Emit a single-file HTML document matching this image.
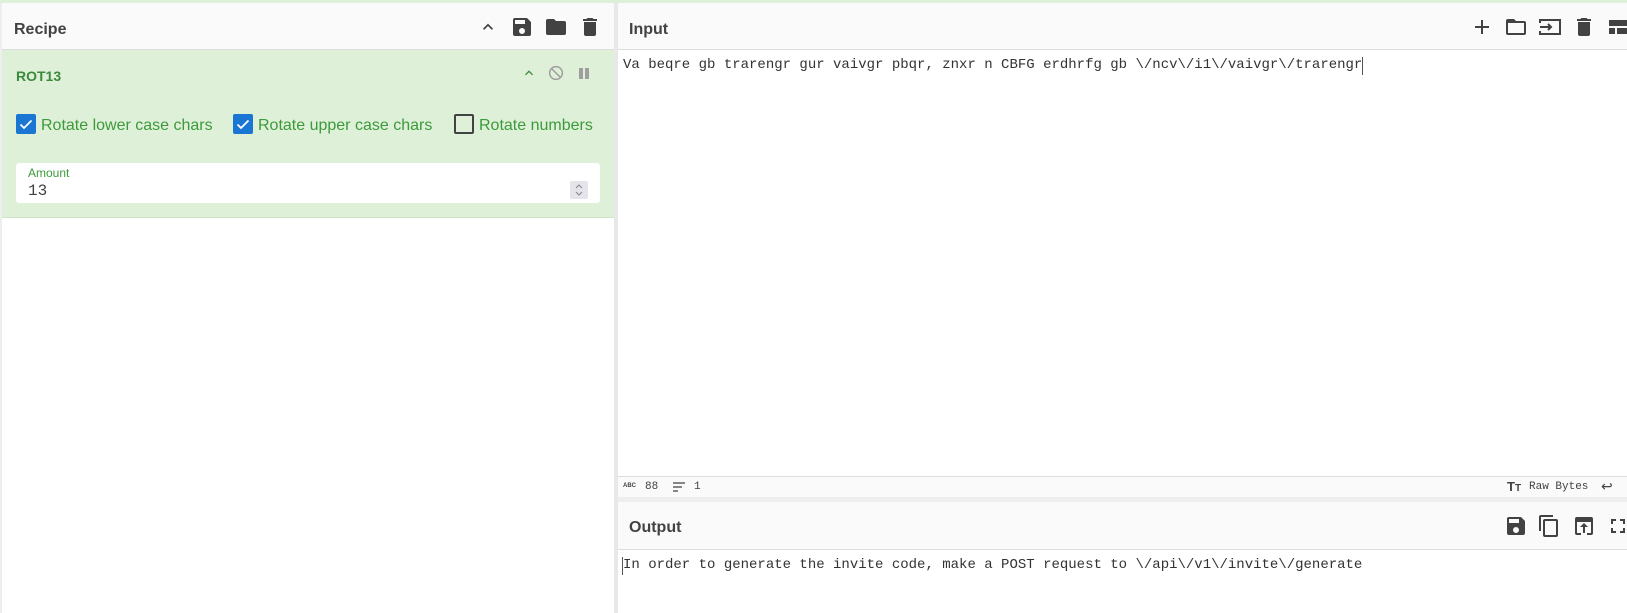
<!DOCTYPE html>
<html><head><meta charset="utf-8"><style>
*{margin:0;padding:0;box-sizing:border-box}
body{width:1627px;height:613px;overflow:hidden;background:#fff;font-family:"Liberation Sans",Arial,sans-serif;position:relative}
.a{position:absolute}
.t{position:absolute;white-space:nowrap}
.mono{font-family:"Liberation Mono",monospace}
svg{position:absolute}
</style></head><body>
<div class="a" style="left:0;top:0;width:1627px;height:3px;background:#dff0d8"></div>
<div class="a" style="left:0;top:3px;width:2px;height:610px;background:#eee"></div>
<!-- Recipe header -->
<div class="a" style="left:2px;top:3px;width:612px;height:47px;background:#fafafa;border-bottom:1px solid #ddd"></div>
<div class="t" style="left:14px;top:21px;font-size:16px;font-weight:bold;color:#424242">Recipe</div>
<svg style="left:478px;top:17px" width="20" height="20" viewBox="0 0 24 24"><path d="M7.4 15.4L12 10.8l4.6 4.6L18 14l-6-6-6 6z" fill="#424242"/></svg>
<svg style="left:510px;top:15px" width="24" height="24" viewBox="0 0 24 24"><path d="M17 3H5a2 2 0 0 0-2 2v14a2 2 0 0 0 2 2h14a2 2 0 0 0 2-2V7l-4-4zm-5 16a3 3 0 1 1 0-6 3 3 0 0 1 0 6zm3-10H5V5h10v4z" fill="#424242"/></svg>
<svg style="left:544px;top:15px" width="24" height="24" viewBox="0 0 24 24"><path d="M10 4H4a2 2 0 0 0-2 2v12a2 2 0 0 0 2 2h16a2 2 0 0 0 2-2V8a2 2 0 0 0-2-2h-8l-2-2z" fill="#424242"/></svg>
<svg style="left:578px;top:15px" width="24" height="24" viewBox="0 0 24 24"><path d="M6 19a2 2 0 0 0 2 2h8a2 2 0 0 0 2-2V7H6v12zM19 4h-3.5l-1-1h-5l-1 1H5v2h14V4z" fill="#424242"/></svg>
<!-- ROT13 -->
<div class="a" style="left:2px;top:50px;width:612px;height:168px;background:#dff0d8;border-bottom:1px solid #cfe3c6"></div>
<div class="t" style="left:16px;top:68px;font-size:14px;font-weight:bold;color:#3c8a3c">ROT13</div>
<svg style="left:521px;top:65px" width="16" height="16" viewBox="0 0 24 24"><path d="M7.4 15.4L12 10.8l4.6 4.6L18 14l-6-6-6 6z" fill="#3c8a3c"/></svg>
<svg style="left:547px;top:64px" width="18" height="18" viewBox="0 0 24 24"><circle cx="12" cy="12" r="8.5" fill="none" stroke="#9e9e9e" stroke-width="2"/><path d="M6 6l12 12" stroke="#9e9e9e" stroke-width="2"/></svg>
<div class="a" style="left:579px;top:68px;width:4px;height:11px;background:#9e9e9e"></div>
<div class="a" style="left:585px;top:68px;width:4px;height:11px;background:#9e9e9e"></div>
<div class="a" style="left:16px;top:114px;width:20px;height:20px;background:#1976d2;border-radius:2px"></div>
<svg style="left:16px;top:114px" width="20" height="20" viewBox="0 0 20 20"><path d="M4.5 10.5l3.5 3.5 7.5-7.5" fill="none" stroke="#fff" stroke-width="1.8"/></svg>
<div class="t" style="left:41px;top:117px;font-size:16px;color:#3c9a3c">Rotate lower case chars</div>
<div class="a" style="left:233px;top:114px;width:20px;height:20px;background:#1976d2;border-radius:2px"></div>
<svg style="left:233px;top:114px" width="20" height="20" viewBox="0 0 20 20"><path d="M4.5 10.5l3.5 3.5 7.5-7.5" fill="none" stroke="#fff" stroke-width="1.8"/></svg>
<div class="t" style="left:258px;top:117px;font-size:16px;color:#3c9a3c">Rotate upper case chars</div>
<div class="a" style="left:454px;top:114px;width:20px;height:20px;border:2px solid #424242;border-radius:2px"></div>
<div class="t" style="left:479px;top:117px;font-size:16px;color:#3c9a3c">Rotate numbers</div>
<div class="a" style="left:16px;top:163px;width:584px;height:40px;background:#fff;border-radius:3px"></div>
<div class="t" style="left:28px;top:166px;font-size:12px;color:#3c9a3c">Amount</div>
<div class="t mono" style="left:28px;top:182px;font-size:16px;color:#424242">13</div>
<div class="a" style="left:570px;top:181px;width:18px;height:18px;background:#e4e4ea;border-radius:2px"></div>
<svg style="left:570px;top:181px" width="18" height="18" viewBox="0 0 18 18"><path d="M6 7l3-3 3 3M6 11l3 3 3-3" fill="none" stroke="#888" stroke-width="1"/></svg>
<!-- divider -->
<div class="a" style="left:614px;top:3px;width:4px;height:610px;background:#e8e8e8"></div>
<!-- Input header -->
<div class="a" style="left:618px;top:3px;width:1009px;height:47px;background:#fafafa;border-bottom:1px solid #ddd"></div>
<div class="t" style="left:629px;top:21px;font-size:16px;font-weight:bold;color:#424242">Input</div>
<svg style="left:1470px;top:15px" width="24" height="24" viewBox="0 0 24 24"><path d="M12 5v14M5 12h14" stroke="#424242" stroke-width="2"/></svg>
<svg style="left:1504px;top:15px" width="24" height="24" viewBox="0 0 24 24"><path d="M10 4H4a2 2 0 0 0-2 2v12a2 2 0 0 0 2 2h16a2 2 0 0 0 2-2V8a2 2 0 0 0-2-2h-8l-2-2zm10 14H4V8h16v10z" fill="#424242"/></svg>
<svg style="left:1538px;top:15px" width="24" height="24" viewBox="0 0 24 24"><path d="M2 8V5h20v14H2v-3M2 12h11M10 9l3 3-3 3" fill="none" stroke="#424242" stroke-width="2"/></svg>
<svg style="left:1572px;top:15px" width="24" height="24" viewBox="0 0 24 24"><path d="M6 19a2 2 0 0 0 2 2h8a2 2 0 0 0 2-2V7H6v12zM19 4h-3.5l-1-1h-5l-1 1H5v2h14V4z" fill="#424242"/></svg>
<svg style="left:1607px;top:15px" width="24" height="24" viewBox="0 0 24 24"><path d="M2 5h20v6H2zM2 13h6v6H2zM10 13h12v6H10z" fill="#424242"/></svg>
<div class="t mono" style="left:623px;top:57px;font-size:14px;color:#333">Va beqre gb trarengr gur vaivgr pbqr, znxr n CBFG erdhrfg gb \/ncv\/i1\/vaivgr\/trarengr</div>
<div class="a" style="left:1362px;top:57px;width:1px;height:18px;background:#555"></div>
<!-- status bar -->
<div class="a" style="left:618px;top:476px;width:1009px;height:21px;background:#fafafa;border-top:1px solid #ddd"></div>
<div class="t" style="left:623px;top:483px;font-size:6px;font-weight:bold;color:#424242">ABC</div>
<div class="t mono" style="left:645px;top:481px;font-size:11px;color:#424242">88</div>
<svg style="left:672px;top:481px" width="14" height="12" viewBox="0 0 14 12"><path d="M1 2h12M1 6h9M1 10h5" stroke="#424242" stroke-width="1.3"/></svg>
<div class="t mono" style="left:694px;top:481px;font-size:11px;color:#424242">1</div>
<div class="t" style="left:1507px;top:479px;font-size:13px;font-weight:bold;color:#424242">T<span style="font-size:10px">T</span></div>
<div class="t mono" style="left:1529px;top:481px;font-size:11px;color:#424242">Raw Bytes</div>
<div class="t" style="left:1601px;top:478px;font-size:14px;color:#424242">↩</div>
<div class="a" style="left:618px;top:497px;width:1009px;height:5px;background:#eee"></div>
<!-- Output -->
<div class="a" style="left:618px;top:502px;width:1009px;height:48px;background:#fafafa;border-bottom:1px solid #ddd"></div>
<div class="t" style="left:629px;top:519px;font-size:16px;font-weight:bold;color:#424242">Output</div>
<svg style="left:1504px;top:514px" width="24" height="24" viewBox="0 0 24 24"><path d="M17 3H5a2 2 0 0 0-2 2v14a2 2 0 0 0 2 2h14a2 2 0 0 0 2-2V7l-4-4zm-5 16a3 3 0 1 1 0-6 3 3 0 0 1 0 6zm3-10H5V5h10v4z" fill="#424242"/></svg>
<svg style="left:1537px;top:514px" width="24" height="24" viewBox="0 0 24 24"><path d="M16 1H4a2 2 0 0 0-2 2v14h2V3h12V1zm3 4H8a2 2 0 0 0-2 2v14a2 2 0 0 0 2 2h11a2 2 0 0 0 2-2V7a2 2 0 0 0-2-2zm0 16H8V7h11v14z" fill="#424242"/></svg>
<svg style="left:1572px;top:514px" width="24" height="24" viewBox="0 0 24 24"><path d="M19 3H5a2 2 0 0 0-2 2v14a2 2 0 0 0 2 2h4v-2H5V8h14v11h-4v2h4a2 2 0 0 0 2-2V5a2 2 0 0 0-2-2zm-7 6l-4 4h3v6h2v-6h3l-4-4z" fill="#424242"/></svg>
<svg style="left:1606px;top:514px" width="24" height="24" viewBox="0 0 24 24"><path d="M7 14H5v5h5v-2H7v-3zm-2-4h2V7h3V5H5v5zm12 7h-3v2h5v-5h-2v3zM14 5v2h3v3h2V5h-5z" fill="#424242"/></svg>
<div class="a" style="left:622px;top:557px;width:1px;height:18px;background:#555"></div>
<div class="t mono" style="left:623px;top:557px;font-size:14px;color:#333">In order to generate the invite code, make a POST request to \/api\/v1\/invite\/generate</div>
</body></html>
